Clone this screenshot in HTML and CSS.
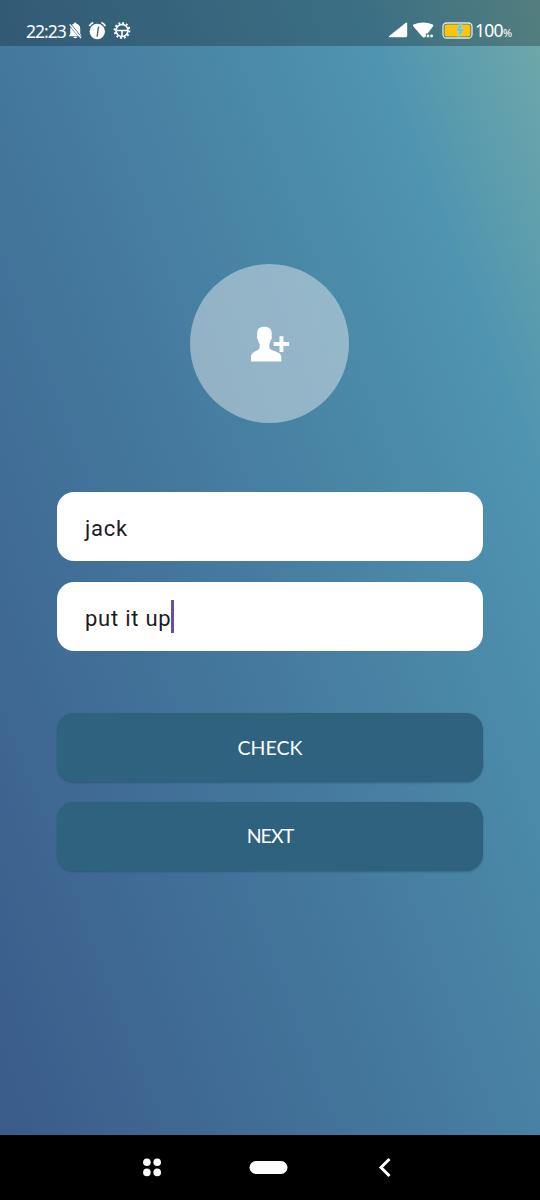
FILE: index.html
```html
<!DOCTYPE html>
<html lang="en">
<head>
<meta charset="utf-8">
<title>Profile</title>
<link rel="stylesheet" href="styles.css">
</head>
<body>
<div class="phone">
  <header class="status">
    <span class="time">22:23</span>
    <svg class="notices" viewBox="68 17.500 64 26" width="64" height="26" fill="#fff">
      <path d="M75.200 22q1.400 0 1.400 1.300c2.500.8 3.600 2.700 3.600 5v5l1.600 2.500H68.800l1.500-2.500v-5c0-2.500 1.100-4.300 3.500-5q0-1.300 1.400-1.300zM73.300 36.300h3.800q-.2 1.500-1.900 1.500t-1.900-1.500z"/>
      <path d="M71 23.500l10.700 13.500" stroke="#38617a" stroke-width=".9"/>
      <path d="M69.700 23.800l11.300 13.800" stroke="#fff" stroke-width="1.200"/>
      <path d="M70 26l9 11" stroke="#38617a" stroke-width=".6"/>
      <circle cx="97.300" cy="31" r="7.700"/>
      <path d="M89.300 25.600q1.500-2.500 4-3.600M101.400 22q2.500 1.100 4 3.600" fill="none" stroke="#fff" stroke-width="1.600"/>
      <path d="M98.800 26.200q-1 2.500-1 5.200l-.7 4.800" fill="none" stroke="#38647b" stroke-width="1.300"/>
      <circle cx="122" cy="30" r="7.400" fill="none" stroke="#fff" stroke-width="2" stroke-dasharray="1.900 1.975"/>
      <circle cx="122" cy="30" r="6" fill="none" stroke="#fff" stroke-width="1.700"/>
      <path d="M117 30h10M122 30v6" stroke="#fff" stroke-width="1.600"/>
    </svg>
    <svg class="signals" viewBox="388 17.500 86 26" width="86" height="26" fill="#fff">
      <path d="M389.200 35.500l16.300-13q1.700-1.100 1.700.8v12q0 1.400-1.400 1.400h-16.200q-1.200 0-.4-1.200z"/>
      <path d="M413.200 25.800q-.8-1 .3-1.700 9.700-4.300 19.300 0 1.100.7.300 1.700l-5.500 7.200h-1.800v3l-1.200.7q-1.300.6-2.300-.5z"/>
      <circle cx="428" cy="35.500" r="1.400"/><circle cx="431.600" cy="35.500" r="1.400"/>
      <rect x="443" y="22.500" width="29" height="15" rx="3.500" fill="none" stroke="#e5e8e3" stroke-width="1.300"/>
      <rect x="444.600" y="24" width="25.800" height="12" rx="2" fill="#fbc40d"/>
      <path d="M460.700 22.500l-5.200 8.200h3.500l-1.500 7.300 7.200-9.500h-4.200l2.200-6z" fill="#63cbe0" stroke="#d7dda5" stroke-width=".4"/>
    </svg>
    <span class="charge">100<small>%</small></span>
  </header>
  <main class="content">
    <div class="avatar">
      <svg viewBox="250 325 40 38" width="40" height="38" fill="#fff">
        <path d="M264.300 326.800c5 0 7.500 2.500 7.400 6.600l-.1 2.800c.8.900.4 2.600-.7 3.700-.4 1.900-1 3-1.600 4v4.200c1.500 3 12 3.500 12 8.800v4.600H251v-4.600c0-5.300 7.500-5.800 8.700-8.800v-4.200c-.9-1-1.400-2.200-1.600-4-1.300-1-1.700-2.900-.9-3.700v-2.800c-.1-4.100 2-6.600 7.100-6.600z"/>
        <path d="M279.500 336.200h3.900v5.900h5.800v3.900h-5.800v6.100h-3.900V346h-5.800v-3.900h5.800z"/>
      </svg>
    </div>
    <div class="field">jack</div>
    <div class="field">put it up<i class="caret"></i></div>
    <div class="actions">
      <button class="button">CHECK</button>
      <button class="button next">NEXT</button>
    </div>
  </main>
  <nav class="navigation">
    <svg viewBox="140 1155 256 26" width="256" height="26" fill="#fff">
      <circle cx="146.900" cy="1162.200" r="3.800"/><circle cx="157.200" cy="1162.200" r="3.800"/>
      <circle cx="146.900" cy="1172.400" r="3.800"/><circle cx="157.200" cy="1172.400" r="3.800"/>
      <rect x="249.500" y="1161" width="38" height="13" rx="6.500"/>
      <path d="M389.500 1159l-8.500 8.500 8.500 8.500" fill="none" stroke="#fff" stroke-width="3"/>
    </svg>
  </nav>
</div>
</body>
</html>
```
FILE: styles.css
```css
* { box-sizing: border-box; }
body { margin: 0; }
.phone {
  width: 540px;
  height: 1200px;
  display: flex;
  flex-direction: column;
  background: linear-gradient(69deg, #3a5b8a 0%, #457a9e 46%, #4f94b0 81%, #70a9a9 100%) 0 0 / 540px 1135px no-repeat #000;
}
.status {
  height: 46px;
  padding: 15px 0 0 26px;
  display: flex;
  align-items: center;
  background: rgba(0, 0, 0, .25);
  color: #fff;
  font: 17.500px/24px "Noto Sans", sans-serif;
}
.time { width: 42px; letter-spacing: -1px; white-space: nowrap; }
.notices { flex: none; }
.signals { flex: none; margin-left: 256px; }
.charge { margin: 2px 0 0 1px; letter-spacing: -.7px; white-space: nowrap; }
.charge small { font-size: 11px; }
.content {
  flex: 1;
  padding: 218px 57px 0;
  display: flex;
  flex-direction: column;
}
.avatar {
  width: 159px;
  height: 159px;
  margin: 0 0 69px 133px;
  display: grid;
  place-items: center;
  border-radius: 50%;
  background: rgba(223, 230, 235, .5);
}
.field {
  height: 69px;
  margin-bottom: 21px;
  padding: 4px 28px 0;
  display: flex;
  align-items: center;
  border-radius: 17px;
  background: #fff;
  color: #1c1b1f;
  font: 22px/30px Roboto, sans-serif;
  letter-spacing: .75px;
}
.caret { width: 3px; height: 33px; margin: -4px 0 0 0; background: #6750a4; }
.actions { display: grid; gap: 20px; margin-top: 41px; }
.button {
  height: 69px;
  border: 0;
  padding: 0;
  border-radius: 17px;
  background: #2f627e;
  box-shadow: 0 1px 2px rgba(20, 50, 80, .35);
  color: #fff;
  font: 19.500px/24px Lato, sans-serif;
}
.next { padding-bottom: 1px; letter-spacing: -.9px; }
.navigation { height: 65px; padding: 20px 0 0 140px; background: #000; }
```
